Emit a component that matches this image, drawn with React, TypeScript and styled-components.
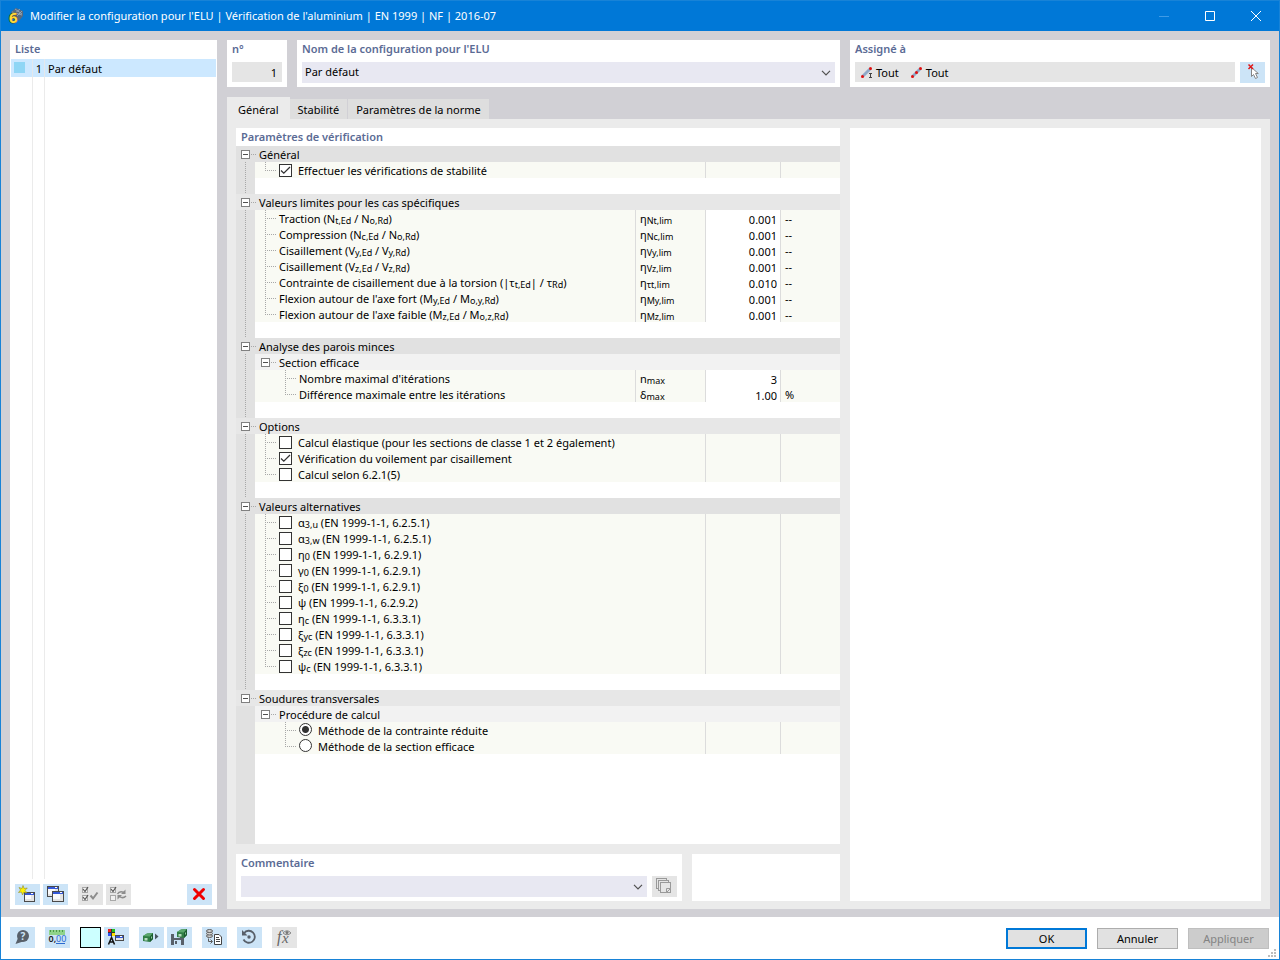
import React, { ReactNode, useId, useState } from "react";
import styled, { createGlobalStyle, css } from "styled-components";

const color = {
  accent: "#0078d7",
  frame: "#1883d7",
  body: "#d1d0d5",
  page: "#ebebeb",
  heading: "#5b6b95",
  tool: "#cce4f7",
  muted: "#e5e5e5",
  field: "#e8e8f2",
  cell: "#f9faf4",
  gutter: "#e1e1e1",
  line: "#dcdcdc",
  dots: "#a8a8a8",
};

const GlobalStyle = createGlobalStyle`
  *, *::before, *::after { box-sizing: border-box; }
  body {
    margin: 0;
    font: 11px/16px "Noto Sans", "Open Sans", sans-serif;
    color: #000;
    background: #fff;
  }
  button, input, select { font: inherit; color: inherit; margin: 0; padding: 0; border: 0; border-radius: 0; }
  svg { display: block; overflow: visible; }
`;

/* ---------- window frame ---------- */

const Window = styled.div`
  display: flex;
  flex-direction: column;
  min-height: 100vh;
  border: 1px solid ${color.frame};
`;

const TitleBar = styled.header`
  display: flex;
  align-items: center;
  height: 30px;
  padding-left: 7px;
  gap: 6px;
  background: ${color.accent};
  color: #fff;
`;

const WindowTitle = styled.h1`
  flex: 1;
  margin: 0;
  font-size: 11px;
  line-height: 16px;
  font-weight: 400;
`;

const WindowButtons = styled.div`
  display: flex;
`;

const WindowButton = styled.button`
  display: grid;
  place-items: center;
  width: 46px;
  height: 30px;
  background: none;
  color: #fff;
  &:disabled { color: #3f9be6; }
`;

const Main = styled.main`
  flex: 1;
  display: flex;
  gap: 10px;
  padding: 9px 9px 8px;
  background: ${color.body};
`;

const Footer = styled.footer`
  display: flex;
  align-items: flex-start;
  height: 42px;
  padding: 10px 10px 0 9px;
  background: #fff;
  position: relative;
`;

/* ---------- shared parts ---------- */

const Panel = styled.section`
  background: #fff;
`;

const Card = styled(Panel)<{ $width?: number }>`
  ${(p) => (p.$width ? css`flex: 0 0 ${p.$width}px;` : css`flex: 1; min-width: 0;`)}
  height: 47px;
  padding: 0 5px;
`;

const PanelTitle = styled.h2<{ $gap?: number; $inset?: boolean }>`
  margin: 0 0 ${(p) => p.$gap ?? 0}px;
  padding-left: ${(p) => (p.$inset ? 5 : 0)}px;
  font-size: 11px;
  line-height: 18px;
  font-weight: 600;
  color: ${color.heading};
`;

const ToolButton = styled.button`
  flex: none;
  width: 25px;
  height: 21px;
  background: ${color.tool};
  &:disabled { background: ${color.muted}; }
`;

const ToolGroup = styled.div<{ $end?: boolean }>`
  display: flex;
  gap: 3px;
  margin-left: ${(p) => (p.$end ? "auto" : "0")};
`;

/* ---------- list column ---------- */

const ListPanel = styled(Panel)`
  display: flex;
  flex-direction: column;
  flex: 0 0 207px;
`;

const List = styled.ul`
  flex: 1;
  list-style: none;
  margin: 1px 1px 0;
  padding: 0;
  background:
    linear-gradient(#ebebeb, #ebebeb) 21px 0 / 1px 100% no-repeat,
    linear-gradient(#ebebeb, #ebebeb) 33px 0 / 1px 100% no-repeat;
`;

const ListItem = styled.li`
  display: grid;
  grid-template-columns: 22px 12px 1fr;
  height: 18px;
  line-height: 20px;
  background:
    linear-gradient(#e4e8ec, #e4e8ec) 21px 0 / 1px 100% no-repeat,
    linear-gradient(#e4e8ec, #e4e8ec) 33px 0 / 1px 100% no-repeat,
    #cce8ff;
`;

const ListSwatch = styled.span`
  width: 11px;
  height: 11px;
  margin: 3px 0 0 3px;
  background: #8fd6f5;
`;

const ListNumber = styled.span`
  text-align: right;
  padding-right: 3px;
`;

const ListName = styled.span`
  padding-left: 3px;
`;

const ListTools = styled.div`
  display: flex;
  gap: 10px;
  padding: 5px 5px 4px;
`;

/* ---------- right column ---------- */

const Content = styled.div`
  flex: 1;
  min-width: 0;
  display: flex;
  flex-direction: column;
`;

const HeaderRow = styled.div`
  display: flex;
  gap: 10px;
`;

const NumberField = styled.input`
  display: block;
  width: 100%;
  height: 20px;
  padding: 1px 5px 0 0;
  text-align: right;
  background: ${color.muted};
`;

const SelectBox = styled.div`
  display: grid;
  flex: 1;
  align-items: center;
  height: 21px;
  background: ${color.field};
  > * { grid-area: 1 / 1; }
  > svg { justify-self: end; margin-right: 4px; pointer-events: none; }
`;

const Select = styled.select`
  appearance: none;
  width: 100%;
  height: 21px;
  padding: 0 0 2px 3px;
  background: transparent;
`;

const FieldRow = styled.div`
  display: flex;
  gap: 5px;
`;

const AssignedField = styled.div`
  display: flex;
  flex: 1;
  gap: 11px;
  height: 20px;
  padding: 2px 5px 0;
  background: ${color.muted};
`;

const AssignedItem = styled.span`
  display: flex;
  gap: 3px;
  line-height: 18px;
`;

const Tabs = styled.div`
  display: flex;
  align-items: flex-end;
  margin-top: 10px;
  height: 22px;
`;

const Tab = styled.button<{ $active?: boolean }>`
  height: ${(p) => (p.$active ? 22 : 20)}px;
  padding: ${(p) => (p.$active ? "3px 11px 0" : "1px 8px 0")};
  background: ${(p) => (p.$active ? color.page : "#dedede")};
  & + &:not(:nth-child(2)) { border-left: 1px solid ${color.body}; }
`;

const TabPage = styled.div`
  flex: 1;
  display: flex;
  gap: 10px;
  padding: 9px 9px 8px;
  background: ${color.page};
`;

const LeftColumn = styled.div`
  flex: 1;
  min-width: 0;
  display: flex;
  flex-direction: column;
  gap: 10px;
`;

const ParameterPanel = styled(Panel)`
  flex: 1;
  display: flex;
  flex-direction: column;
`;

const PreviewPanel = styled(Panel)`
  flex: 0 0 411px;
`;

/* ---------- parameter tree ---------- */

const TreeArea = styled.div`
  flex: 1;
  background: linear-gradient(${color.gutter}, ${color.gutter}) 0 0 / 19px 100% no-repeat;
`;

const Tree = styled.table`
  width: 100%;
  table-layout: fixed;
  border-collapse: separate;
  border-spacing: 0;
  td, th { height: 16px; padding: 0; text-align: left; font-weight: 400; vertical-align: top; }
`;

const Col = styled.col<{ $width?: number }>`
  width: ${(p) => (p.$width ? `${p.$width}px` : "auto")};
`;

const verticalDots = (x: number, size = "2px") =>
  `linear-gradient(${color.dots} 50%, transparent 50%) ${x}px 0 / 1px ${size} repeat-y`;

const Gutter = styled.td<{ $line: boolean }>`
  background: ${(p) => (p.$line ? verticalDots(9) + "," : "")} linear-gradient(${color.gutter}, ${color.gutter});
`;

const GroupCell = styled.th<{ $light: boolean }>`
  background: ${(p) => (p.$light ? "#e7e7e7" : color.gutter)};
`;

const SubgroupCell = styled.th`
  background: #f2f2f2;
`;

const NameCell = styled.td`
  background: ${color.cell};
`;

const LinedCell = styled.td<{ $plain?: boolean }>`
  border-left: 1px solid ${color.line};
  background: ${(p) => (p.$plain ? "#fff" : color.cell)};
`;

const CellText = styled.div`
  height: 16px;
  line-height: 18px;
  padding-left: 4px;
  white-space: nowrap;
`;

const Line = styled.div`
  display: flex;
  height: 16px;
  line-height: 18px;
  white-space: nowrap;
`;

const Toggle = styled.button<{ $inset: number }>`
  flex: none;
  display: block;
  width: 9px;
  height: 9px;
  margin: 4px 0 0 ${(p) => p.$inset}px;
  border: 1px solid #808080;
  background: linear-gradient(#505050, #505050) 1px 3px / 5px 1px no-repeat, #fff;
`;

const Dash = styled.span`
  flex: none;
  width: 6px;
  height: 1px;
  margin: 8px 3px 0 0;
  background: linear-gradient(90deg, transparent 50%, ${color.dots} 50%) 0 0 / 2px 1px repeat-x;
`;

const Branch = styled.span<{ $level: number; $last: boolean }>`
  flex: none;
  width: 14px;
  height: ${(p) => (p.$last ? 9 : 16)}px;
  margin-left: ${(p) => (p.$level === 2 ? 30 : 10)}px;
  background:
    ${verticalDots(0)},
    linear-gradient(90deg, ${color.dots} 50%, transparent 50%) 0 8px / 2px 1px repeat-x;
  background-clip: border-box, content-box;
  padding-right: 3px;
`;

const OptionLabel = styled.label`
  display: flex;
  gap: 6px;
`;

const Mark = styled.span`
  display: grid;
  align-self: start;
  margin-top: 2px;
  > * { grid-area: 1 / 1; pointer-events: none; }
  > input { pointer-events: auto; }
`;

const CheckInput = styled.input`
  appearance: none;
  width: 13px;
  height: 13px;
  border: 1px solid #333;
  background: #fff;
`;

const RadioInput = styled.input`
  appearance: none;
  width: 13px;
  height: 13px;
  border: 1px solid #333;
  border-radius: 50%;
  background: #fff;
  &:checked { background: radial-gradient(circle, #333 0 3px, #fff 4px); }
`;

const RadioMark = styled.span`
  align-self: start;
  display: grid;
  margin-top: 1px;
`;

const ValueInput = styled.input`
  display: block;
  width: 100%;
  height: 16px;
  padding: 2px 3px 0 0;
  line-height: 14px;
  text-align: right;
  background: transparent;
`;

const Sub = styled.sub`
  font-size: 9px;
  line-height: 0;
  vertical-align: -1px;
`;

/* ---------- bottom ---------- */

const BottomRow = styled.div`
  display: flex;
  gap: 10px;
`;

const FooterTools = styled.div`
  display: flex;
  gap: 10px;
  flex: 1;
`;

const ColorButton = styled.button`
  width: 21px;
  height: 21px;
  border: 1px solid #000;
  background: #ccffff;
`;

const DialogButtons = styled.div`
  display: flex;
  gap: 10px;
  padding-top: 1px;
`;

const DialogButton = styled.button<{ $primary?: boolean }>`
  width: 81px;
  height: 21px;
  line-height: 16px;
  background: #e1e1e1;
  border: ${(p) => (p.$primary ? `2px solid ${color.accent}` : "1px solid #adadad")};
  &:disabled { background: #cccccc; border-color: #bfbfbf; color: #838383; }
`;

const SizeGrip = styled.svg`
  position: absolute;
  right: 3px;
  bottom: 2px;
`;

/* ---------- icons ---------- */

const Icon = ({ children }: { children: ReactNode }) => (
  <svg width="25" height="21" viewBox="0 0 25 21" fill="none" aria-hidden="true">
    {children}
  </svg>
);

const MiniWindow = ({ x, y, w = 11, h = 10 }: { x: number; y: number; w?: number; h?: number }) => (
  <g>
    <rect x={x + 0.5} y={y + 0.5} width={w - 1} height={h - 1} fill="#e4e4e4" stroke="#4a4a4a" />
    <rect x={x + 1} y={y + 1} width={w - 2} height="2" fill="#3458d8" />
    <rect x={x + w - 4} y={y + 1} width="2" height="1" fill="#fff" />
    <rect x={x + 1} y={y + 3} width={w - 5} height={h - 6} fill="#fafafa" />
  </g>
);

const CheckSquare = ({ y, checked }: { y: number; checked?: boolean }) => (
  <g>
    <rect x="4.5" y={y + 0.5} width="5" height="5" fill="#f0f0f0" stroke="#a8a8a8" />
    {checked && <path d={`M5 ${y + 2}l2 2.5l3-4.5`} stroke="#555" strokeWidth="1.2" />}
  </g>
);

const GreenBlock = ({ x, y }: { x: number; y: number }) => (
  <g transform={`translate(${x} ${y})`}>
    <path d="M0 3L4 0.500L10 0V6L7 9L0 8Z" fill="#2f7d45" />
    <path d="M0 3L4 0.500L10 0L7 3.500Z" fill="#5aa76d" />
    <path d="M7 3.500L10 0V6L7 9Z" fill="#1b5a30" />
    <path d="M1.500 5H4.500V7.500H1.500Z" fill="#b6dcbf" />
    <path d="M8 4l1-1v2l-1 1z" fill="#8fc79d" />
  </g>
);

const AppLogo = () => (
  <svg width="16" height="18" viewBox="0 0 16 18" aria-hidden="true">
    <path d="M3 5L8 1L15 4L15 9L11 14L5 8Z" fill="#566a80" />
    <path d="M4 5l10 3M7 2l7 5M6 7l6-5M9 9l5-5" stroke="#9fb0c0" strokeWidth="0.8" fill="none" />
    <text x="1" y="16" fontFamily="Noto Sans, sans-serif" fontWeight="700" fontSize="15" fill="#ffd83a" stroke="#5a4a10" strokeWidth="1" paintOrder="stroke">6</text>
  </svg>
);

const Chevron = () => (
  <svg width="10" height="6" viewBox="0 0 10 6" fill="none" stroke="#505050" strokeWidth="1.200" aria-hidden="true">
    <path d="M1 0.8L5 4.800L9 0.800" />
  </svg>
);

const MemberIcon = ({ section }: { section?: boolean }) => (
  <svg width="13" height="17" viewBox="0 0 13 17" fill="none" aria-hidden="true">
    <path d="M2.500 12.500L10.500 4.500" stroke="#8fa9c8" strokeWidth="3" />
    <circle cx="2.500" cy="12.500" r="1.500" fill="#e01010" />
    <circle cx="10.500" cy="4.500" r="1.500" fill="#e01010" />
    {section ? (
      <path d="M9 9.500h3M9 13.500h3M10.500 9.500v4" stroke="#444" />
    ) : (
      <circle cx="6.500" cy="8.500" r="1.500" fill="#e01010" />
    )}
  </svg>
);

const icons = {
  create: (
    <Icon>
      <MiniWindow x={9} y={8} />
      <path d="M8 1.500L9.200 4.500L12.300 4L10 6.300L12 9L8.800 8.200L7.500 11L6.500 8L3.500 8.500L5.500 6L4 3.500L7 4.500Z" fill="#fff200" stroke="#8f8a2a" strokeWidth="0.600" />
    </Icon>
  ),
  duplicate: (
    <Icon>
      <MiniWindow x={4} y={2} w={12} h={11} />
      <MiniWindow x={9} y={7} w={12} h={11} />
    </Icon>
  ),
  checkAll: (
    <Icon>
      <CheckSquare y={3} checked />
      <CheckSquare y={11} checked />
      <path d="M12.500 11.500L15 14.500L19.500 8.500" stroke="#8c8c8c" strokeWidth="2" />
    </Icon>
  ),
  invertChecks: (
    <Icon>
      <CheckSquare y={3} checked />
      <CheckSquare y={11} />
      <path d="M11.500 10Q13.500 6.500 18 8.500M20 12Q17 15 13.500 12.500" stroke="#8c8c8c" strokeWidth="1.500" />
      <path d="M19.500 5.500v4.500h-4.500zM11.500 15.500v-4.500h4.500z" fill="#8c8c8c" />
    </Icon>
  ),
  remove: (
    <Icon>
      <path d="M7.500 5.500L16.500 14.500M16.500 5.500L7.500 14.500" stroke="#f00000" strokeWidth="3" strokeLinecap="round" />
    </Icon>
  ),
  pick: (
    <Icon>
      <path d="M11.500 5.500V14.500L13.500 12.500L15.500 16.500L17.500 15.500L15.500 11.500H18.300Z" fill="#fff" stroke="#858585" />
      <path d="M8.500 2.500L13 7M13 2.500L8.500 7" stroke="#e01818" strokeWidth="1.500" />
    </Icon>
  ),
  pages: (
    <Icon>
      <g stroke="#999" fill="#e5e5e5">
        <rect x="4.500" y="2.500" width="10" height="10" />
        <rect x="6.500" y="4.500" width="10" height="10" />
        <rect x="8.500" y="6.500" width="10" height="10" />
        <path d="M14.500 16.500V12.500H18.500" />
        <path d="M15 16l3-3" />
      </g>
    </Icon>
  ),
  help: (
    <Icon>
      <circle cx="13" cy="9" r="6" fill="#58606a" />
      <path d="M8 11L5.500 17L13 14.500Z" fill="#58606a" />
      <text x="10.500" y="13" fontFamily="Noto Sans, sans-serif" fontWeight="700" fontSize="10" fill="#cce4f7">?</text>
    </Icon>
  ),
  units: (
    <Icon>
      <rect x="4" y="3" width="16" height="5" fill="#8fd48a" />
      <path d="M5.500 3v2M8.500 3v2M11.500 3v2M14.500 3v2M17.500 3v2" stroke="#4c9a4a" />
      <text x="3.500" y="15" fontFamily="Noto Sans, sans-serif" fontWeight="600" fontSize="9" fill="#222">0,</text>
      <text x="11" y="15" fontFamily="Noto Sans, sans-serif" fontSize="9" fill="#2a6ad0">00</text>
      <path d="M11 16.500h9" stroke="#2a6ad0" />
    </Icon>
  ),
  display: (
    <Icon>
      <rect x="4" y="2" width="7" height="7" fill="#333" />
      <rect x="4" y="2" width="3" height="3" fill="#f02020" />
      <rect x="8" y="2" width="3" height="3" fill="#20c020" />
      <rect x="4" y="6" width="3" height="3" fill="#3050f0" />
      <rect x="8" y="6" width="3" height="3" fill="#ffe000" />
      <path d="M4.500 17.500L7.500 10.500L10.500 17.500M5.500 15h4" stroke="#111" strokeWidth="1.500" />
      <MiniWindow x={11} y={8} w={9} h={6} />
    </Icon>
  ),
  load: (
    <Icon>
      <GreenBlock x={4} y={6} />
      <path d="M16 6.500L19.500 9.500L16 12.500Z" fill="#4a5560" />
    </Icon>
  ),
  save: (
    <Icon>
      <path d="M4 7H15L17 9V18H4Z" fill="#58606a" />
      <rect x="7" y="7" width="6" height="4" fill="#cce4f7" />
      <rect x="7" y="13" width="7" height="5" fill="#cce4f7" />
      <rect x="8" y="14" width="2" height="3" fill="#58606a" />
      <GreenBlock x={10} y={2} />
    </Icon>
  ),
  database: (
    <Icon>
      <g stroke="#5c5c5c" fill="#cfcfcf">
        <ellipse cx="7.500" cy="9" rx="3" ry="1.500" />
        <ellipse cx="7.500" cy="6.500" rx="3" ry="1.500" />
        <ellipse cx="7.500" cy="4" rx="3" ry="1.500" />
      </g>
      <path d="M6.500 11.500V14.500H10M8.500 12.500L10.500 14.500L8.500 16.500" stroke="#5c5c5c" />
      <path d="M12.500 7.500H17L19.500 10V17.500H12.500Z" fill="#fff" stroke="#444" />
      <path d="M14 10.500h3M14 12.500h4M14 14.500h4" stroke="#444" />
    </Icon>
  ),
  reset: (
    <Icon>
      <path d="M7 6.200A6 6 0 1 1 6.500 12.500" stroke="#58606a" strokeWidth="1.800" />
      <path d="M5 3V8.500H10.500Z" fill="#58606a" />
      <circle cx="12" cy="10" r="1.700" fill="#58606a" />
    </Icon>
  ),
  formula: (
    <Icon>
      <text x="5" y="15" fontFamily="Liberation Serif, serif" fontStyle="italic" fontSize="16" fill="#666">f</text>
      <text x="10" y="16" fontFamily="Liberation Serif, serif" fontStyle="italic" fontSize="15" fill="#666">x</text>
      <path d="M11 6Q15 1.500 19 6Q15 9.500 11 6Z" stroke="#888" />
      <circle cx="15" cy="5.500" r="1.500" fill="#777" />
    </Icon>
  ),
};

type IconName = keyof typeof icons;

const Tool = ({ icon, label, disabled }: { icon: IconName; label: string; disabled?: boolean }) => (
  <ToolButton type="button" aria-label={label} title={label} disabled={disabled}>
    {icons[icon]}
  </ToolButton>
);

/* ---------- data ---------- */

type Item =
  | { kind: "value"; name: ReactNode; symbol: ReactNode; value: string; unit: string; label: string }
  | { kind: "check"; name: ReactNode; checked?: boolean }
  | { kind: "radio"; name: ReactNode; checked?: boolean };

type Group = { title: string; subgroup?: string; items: Item[] };

const value = (label: string, name: ReactNode, symbol: ReactNode, v: string, unit = "--"): Item => ({
  kind: "value", label, name, symbol, value: v, unit,
});

const ratio = (text: string, letter: string, a: string, b: string) => (
  <>{text} ({letter}<Sub>{a}</Sub> / {letter}<Sub>{b}</Sub>)</>
);

const eta = (index: string) => <>η<Sub>{index}</Sub></>;

const clause = (letter: string, index: string, number: string): Item => ({
  kind: "check",
  name: <>{letter}{index && <Sub>{index}</Sub>} (EN 1999-1-1, {number})</>,
});

const groups: Group[] = [
  { title: "Général", items: [{ kind: "check", name: "Effectuer les vérifications de stabilité", checked: true }] },
  {
    title: "Valeurs limites pour les cas spécifiques",
    items: [
      value("Traction", ratio("Traction", "N", "t,Ed", "o,Rd"), eta("Nt,lim"), "0.001"),
      value("Compression", ratio("Compression", "N", "c,Ed", "o,Rd"), eta("Nc,lim"), "0.001"),
      value("Cisaillement y", ratio("Cisaillement", "V", "y,Ed", "y,Rd"), eta("Vy,lim"), "0.001"),
      value("Cisaillement z", ratio("Cisaillement", "V", "z,Ed", "z,Rd"), eta("Vz,lim"), "0.001"),
      value(
        "Torsion",
        <>Contrainte de cisaillement due à la torsion (|τ<Sub>t,Ed</Sub>| / τ<Sub>Rd</Sub>)</>,
        eta("τt,lim"),
        "0.010",
      ),
      value("Flexion axe fort", ratio("Flexion autour de l'axe fort", "M", "y,Ed", "o,y,Rd"), eta("My,lim"), "0.001"),
      value("Flexion axe faible", ratio("Flexion autour de l'axe faible", "M", "z,Ed", "o,z,Rd"), eta("Mz,lim"), "0.001"),
    ],
  },
  {
    title: "Analyse des parois minces",
    subgroup: "Section efficace",
    items: [
      value("Nombre maximal d'itérations", "Nombre maximal d'itérations", <>n<Sub>max</Sub></>, "3", ""),
      value("Différence maximale", "Différence maximale entre les itérations", <>δ<Sub>max</Sub></>, "1.00", "%"),
    ],
  },
  {
    title: "Options",
    items: [
      { kind: "check", name: "Calcul élastique (pour les sections de classe 1 et 2 également)" },
      { kind: "check", name: "Vérification du voilement par cisaillement", checked: true },
      { kind: "check", name: "Calcul selon 6.2.1(5)" },
    ],
  },
  {
    title: "Valeurs alternatives",
    items: [
      clause("α", "3,u", "6.2.5.1"),
      clause("α", "3,w", "6.2.5.1"),
      clause("η", "0", "6.2.9.1"),
      clause("γ", "0", "6.2.9.1"),
      clause("ξ", "0", "6.2.9.1"),
      clause("ψ", "", "6.2.9.2"),
      clause("η", "c", "6.3.3.1"),
      clause("ξ", "yc", "6.3.3.1"),
      clause("ξ", "zc", "6.3.3.1"),
      clause("ψ", "c", "6.3.3.1"),
    ],
  },
  {
    title: "Soudures transversales",
    subgroup: "Procédure de calcul",
    items: [
      { kind: "radio", name: "Méthode de la contrainte réduite", checked: true },
      { kind: "radio", name: "Méthode de la section efficace" },
    ],
  },
];

/* ---------- tree rows ---------- */

const Checkbox = ({ name, initial }: { name: ReactNode; initial: boolean }) => {
  const [on, setOn] = useState(initial);
  return (
    <OptionLabel>
      <Mark>
        <CheckInput type="checkbox" checked={on} onChange={() => setOn(!on)} />
        {on && (
          <svg width="13" height="13" viewBox="0 0 13 13" fill="none" stroke="#333" strokeWidth="1.300" aria-hidden="true">
            <path d="M2 6.500L4.800 9.200L11 3" />
          </svg>
        )}
      </Mark>
      <span>{name}</span>
    </OptionLabel>
  );
};

const ItemRow = ({ item, level, last, line }: { item: Item; level: number; last: boolean; line: boolean }) => (
  <tr>
    <Gutter $line={line} />
    <NameCell colSpan={item.kind === "value" ? 1 : 2}>
      <Line>
        <Branch $level={level} $last={last} />
        {item.kind === "value" && <span>{item.name}</span>}
        {item.kind === "check" && <Checkbox name={item.name} initial={!!item.checked} />}
        {item.kind === "radio" && (
          <OptionLabel>
            <RadioMark>
              <RadioInput type="radio" name="method" defaultChecked={item.checked} />
            </RadioMark>
            <span>{item.name}</span>
          </OptionLabel>
        )}
      </Line>
    </NameCell>
    {item.kind === "value" ? (
      <>
        <LinedCell><CellText>{item.symbol}</CellText></LinedCell>
        <LinedCell $plain><ValueInput aria-label={item.label} defaultValue={item.value} /></LinedCell>
        <LinedCell><CellText>{item.unit}</CellText></LinedCell>
      </>
    ) : (
      <>
        <LinedCell />
        <LinedCell />
      </>
    )}
  </tr>
);

const GroupRows = ({ group, index }: { group: Group; index: number }) => {
  const final = index === groups.length - 1;
  const [open, setOpen] = useState(true);
  const toggle = () => setOpen(!open);
  return (
    <tbody>
      <tr>
        <GroupCell colSpan={5} $light={index % 2 === 1} scope="rowgroup">
          <Line>
            <Toggle type="button" $inset={5} aria-label={group.title} aria-expanded={open} onClick={toggle} />
            <Dash />
            <span>{group.title}</span>
          </Line>
        </GroupCell>
      </tr>
      {open && group.subgroup && (
        <tr>
          <Gutter $line={!final} />
          <SubgroupCell colSpan={4} scope="rowgroup">
            <Line>
              <Toggle type="button" $inset={6} aria-label={group.subgroup} />
              <Dash />
              <span>{group.subgroup}</span>
            </Line>
          </SubgroupCell>
        </tr>
      )}
      {open &&
        group.items.map((item, i) => (
          <ItemRow
            key={i}
            item={item}
            level={group.subgroup ? 2 : 1}
            last={i === group.items.length - 1}
            line={!final}
          />
        ))}
      {!final && (
        <tr>
          <Gutter $line />
          <td colSpan={4} />
        </tr>
      )}
    </tbody>
  );
};

/* ---------- page ---------- */

export default function App() {
  const id = useId();
  return (
    <>
      <GlobalStyle />
      <Window>
        <TitleBar>
          <AppLogo />
          <WindowTitle>Modifier la configuration pour l'ELU | Vérification de l'aluminium | EN 1999 | NF | 2016-07</WindowTitle>
          <WindowButtons>
            <WindowButton type="button" aria-label="Réduire" disabled>
              <svg width="10" height="10" viewBox="0 0 10 10" stroke="currentColor"><path d="M0 5.500h10" /></svg>
            </WindowButton>
            <WindowButton type="button" aria-label="Agrandir">
              <svg width="10" height="10" viewBox="0 0 10 10" stroke="currentColor" fill="none"><path d="M0.500 0.500h9v9h-9z" /></svg>
            </WindowButton>
            <WindowButton type="button" aria-label="Fermer">
              <svg width="10" height="10" viewBox="0 0 10 10" stroke="currentColor"><path d="M0 0L10 10M10 0L0 10" /></svg>
            </WindowButton>
          </WindowButtons>
        </TitleBar>

        <Main>
          <ListPanel>
            <PanelTitle $inset>Liste</PanelTitle>
            <List>
              <ListItem>
                <ListSwatch />
                <ListNumber>1</ListNumber>
                <ListName>Par défaut</ListName>
              </ListItem>
            </List>
            <ListTools>
              <ToolGroup>
                <Tool icon="create" label="Nouveau" />
                <Tool icon="duplicate" label="Copier" />
              </ToolGroup>
              <ToolGroup>
                <Tool icon="checkAll" label="Tout sélectionner" disabled />
                <Tool icon="invertChecks" label="Inverser la sélection" disabled />
              </ToolGroup>
              <ToolGroup $end>
                <Tool icon="remove" label="Supprimer" />
              </ToolGroup>
            </ListTools>
          </ListPanel>

          <Content>
            <HeaderRow>
              <Card $width={60}>
                <PanelTitle $gap={4}><label htmlFor={`${id}-no`}>n°</label></PanelTitle>
                <NumberField id={`${id}-no`} defaultValue="1" readOnly />
              </Card>
              <Card>
                <PanelTitle $gap={4}><label htmlFor={`${id}-name`}>Nom de la configuration pour l'ELU</label></PanelTitle>
                <SelectBox>
                  <Select id={`${id}-name`}><option>Par défaut</option></Select>
                  <Chevron />
                </SelectBox>
              </Card>
              <Card $width={420}>
                <PanelTitle $gap={4}>Assigné à</PanelTitle>
                <FieldRow>
                  <AssignedField>
                    <AssignedItem><MemberIcon section />Tout</AssignedItem>
                    <AssignedItem><MemberIcon />Tout</AssignedItem>
                  </AssignedField>
                  <Tool icon="pick" label="Sélectionner" />
                </FieldRow>
              </Card>
            </HeaderRow>

            <Tabs role="tablist">
              <Tab type="button" role="tab" aria-selected $active>Général</Tab>
              <Tab type="button" role="tab" aria-selected={false}>Stabilité</Tab>
              <Tab type="button" role="tab" aria-selected={false}>Paramètres de la norme</Tab>
            </Tabs>

            <TabPage role="tabpanel">
              <LeftColumn>
                <ParameterPanel>
                  <PanelTitle $inset>Paramètres de vérification</PanelTitle>
                  <TreeArea>
                    <Tree>
                      <colgroup>
                        <Col $width={19} />
                        <Col />
                        <Col $width={70} />
                        <Col $width={75} />
                        <Col $width={60} />
                      </colgroup>
                      {groups.map((g, i) => <GroupRows key={g.title} group={g} index={i} />)}
                    </Tree>
                  </TreeArea>
                </ParameterPanel>
                <BottomRow>
                  <Card>
                    <PanelTitle $gap={4}><label htmlFor={`${id}-comment`}>Commentaire</label></PanelTitle>
                    <FieldRow>
                      <SelectBox>
                        <Select id={`${id}-comment`}><option></option></Select>
                        <Chevron />
                      </SelectBox>
                      <Tool icon="pages" label="Modèles de commentaire" disabled />
                    </FieldRow>
                  </Card>
                  <Card $width={148} />
                </BottomRow>
              </LeftColumn>
              <PreviewPanel />
            </TabPage>
          </Content>
        </Main>

        <Footer>
          <FooterTools>
            <Tool icon="help" label="Aide" />
            <Tool icon="units" label="Unités et décimales" />
            <ToolGroup>
              <ColorButton type="button" aria-label="Couleur" />
              <Tool icon="display" label="Affichage" />
            </ToolGroup>
            <ToolGroup>
              <Tool icon="load" label="Charger" />
              <Tool icon="save" label="Enregistrer" />
            </ToolGroup>
            <Tool icon="database" label="Base de données" />
            <Tool icon="reset" label="Réinitialiser" />
            <Tool icon="formula" label="Formule" disabled />
          </FooterTools>
          <DialogButtons>
            <DialogButton type="button" $primary>OK</DialogButton>
            <DialogButton type="button">Annuler</DialogButton>
            <DialogButton type="button" disabled>Appliquer</DialogButton>
          </DialogButtons>
          <SizeGrip width="8" height="8" viewBox="0 0 8 8" fill="#bdbdbd" aria-hidden="true">
            <path d="M6 0h2v2h-2zM3 3h2v2h-2zM6 3h2v2h-2zM0 6h2v2h-2zM3 6h2v2h-2zM6 6h2v2h-2z" />
          </SizeGrip>
        </Footer>
      </Window>
    </>
  );
}
